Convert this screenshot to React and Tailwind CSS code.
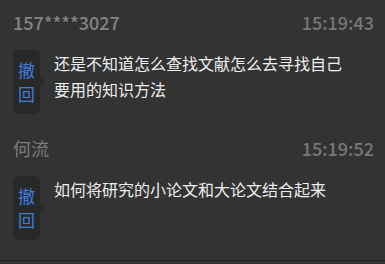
export default function App() {
  const items = [
    {
      name: "157****3027",
      nameCls: "font-medium text-[#858585]",
      time: "15:19:43",
      text: "还是不知道怎么查找文献怎么去寻找自己要用的知识方法",
    },
    {
      name: "何流",
      nameCls: "font-normal text-[#7a7a7a]",
      time: "15:19:52",
      text: "如何将研究的小论文和大论文结合起来",
    },
  ];
  return (
    <div
      className="w-[385px] h-[264px] bg-[#333333] overflow-hidden"
      style={{ fontFamily: '"Noto Sans CJK SC", "Noto Sans", sans-serif' }}
    >
      <div className="h-[261px] border-b border-[#242424]">
        {items.map((it, i) => (
          <div key={i} className="h-[126px] pt-[10px]">
            <div className="flex justify-between items-start px-[13px] pr-[11px] h-[24px] text-[18px] leading-[24px]">
              <span className={it.nameCls}>{it.name}</span>
              <span className="font-medium text-[#777777]">{it.time}</span>
            </div>
            <div className="flex items-start mt-[16px] pl-[13px]">
              <div className="relative w-[27px] h-[64px] rounded-[5px] bg-[#282828] flex flex-col items-center justify-center text-[17px] leading-[24px] text-[#3d7fde]">
                <span>撤</span>
                <span>回</span>
                <div className="absolute left-[27px] top-[27px] w-0 h-0 border-y-[5px] border-y-transparent border-l-[5px] border-l-[#282828]" />
              </div>
              <div className="ml-[14px] w-[296px] text-[16px] leading-[26px] text-[#eeeeee]">
                {it.text}
              </div>
            </div>
          </div>
        ))}
      </div>
    </div>
  );
}
